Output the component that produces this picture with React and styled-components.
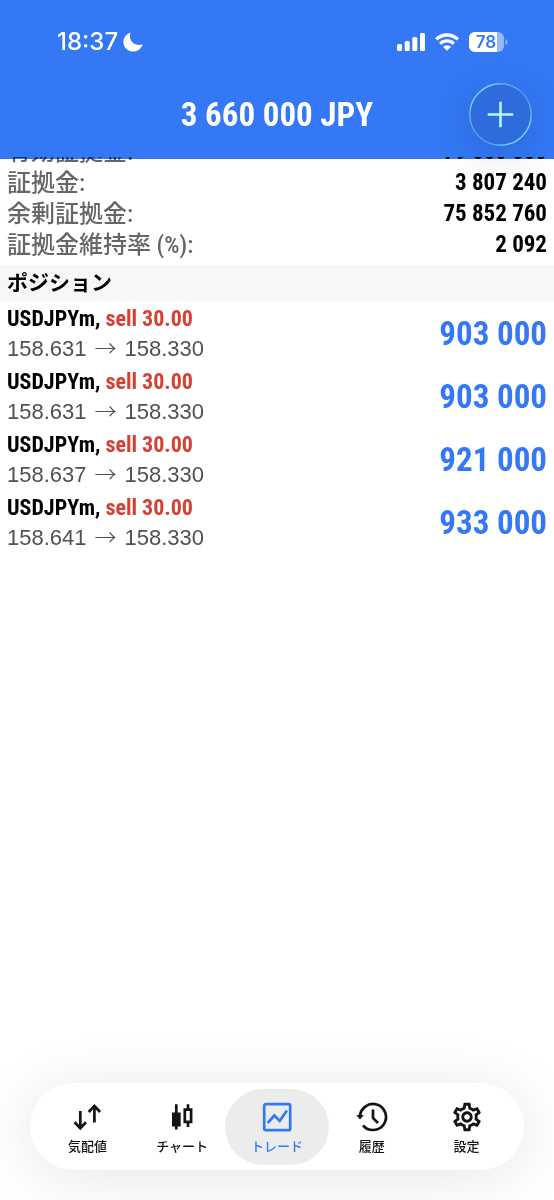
import React from "react";
import styled, { createGlobalStyle } from "styled-components";
import { MdOutlineSettings } from "react-icons/md";

const GlobalStyle = createGlobalStyle`
  * {
    box-sizing: border-box;
  }

  body {
    margin: 0;
    background: #fff;
    font-family: "Liberation Sans", "Noto Sans CJK JP", sans-serif;
  }

  button {
    font-family: inherit;
    border: none;
    background: none;
    cursor: pointer;
  }
`;

const narrow = `"Roboto Condensed", Roboto, "Noto Sans CJK JP", sans-serif`;
const japanese = `"Liberation Sans", "Noto Sans CJK JP", sans-serif`;

const Screen = styled.div`
  display: flex;
  flex-direction: column;
  min-height: 100vh;
  overflow: hidden;
`;

const Header = styled.header`
  position: relative;
  color: #fff;
`;

const HeaderFill = styled.div`
  position: absolute;
  inset: 0 0 2px;
  background: #3478f6;
`;

/* the list shows through the last few pixels of the header */
const HeaderEdge = styled.div`
  position: absolute;
  inset: auto 0 0;
  height: 2px;
  background: #3478f6;
  mix-blend-mode: multiply;
`;

const StatusBar = styled.div`
  position: relative;
  display: flex;
  align-items: center;
  justify-content: space-between;
  height: 83px;
  padding: 0 46px 0 57px;
`;

const StatusGroup = styled.div`
  display: flex;
  align-items: center;
  gap: ${({ $gap }) => $gap}px;
`;

const Clock = styled.span`
  font: 500 24px/28px Inter, sans-serif;
`;

const TitleBar = styled.div`
  position: relative;
  display: grid;
  grid-template-columns: 1fr auto 1fr;
  align-items: center;
  height: 76px;
  padding: 0 22px 14px;
`;

const Title = styled.h1`
  grid-column: 2;
  margin: 0;
  font: 700 33px/40px ${narrow};
`;

const AddButton = styled.button`
  justify-self: end;
  display: flex;
  align-items: center;
  justify-content: center;
  width: 63px;
  height: 63px;
  padding: 0;
  border-radius: 50%;
  color: #b8f6ff;
  background: rgba(0, 0, 0, 0.1);
  box-shadow: 0 8px 44px rgba(0, 0, 0, 0.14);
`;

const Summary = styled.dl`
  margin: -23px 0 0;
  padding: 0 7px 5px;
`;

const SummaryRow = styled.div`
  display: flex;
  align-items: center;
  justify-content: space-between;
  height: 31px;
`;

const SummaryLabel = styled.dt`
  color: #666;
  font: 500 24px/28px ${narrow};
`;

const SummaryValue = styled.dd`
  margin: 0;
  color: #000;
  font: 700 23px/28px ${narrow};
`;

const SectionTitle = styled.h2`
  margin: 0;
  padding: 0 7px;
  color: #000;
  background: #f7f7f7;
  font: 700 21px/36px ${japanese};
`;

const PositionList = styled.ul`
  margin: 0;
  padding: 0;
  list-style: none;
`;

const Position = styled.li`
  display: flex;
  align-items: center;
  justify-content: space-between;
  height: 63px;
  padding: 2px 7px 0;
`;

const Symbol = styled.div`
  color: #000;
  font: 700 22px/30px ${narrow};
`;

const Side = styled.span`
  color: #d63f31;
`;

const Prices = styled.div`
  display: flex;
  gap: 8px;
  color: #505055;
  font: 400 22px/30px "Liberation Sans", sans-serif;
`;

const Arrow = styled.span`
  font-family: "Noto Sans CJK JP", sans-serif;
  font-weight: 300;
  line-height: 24px;
`;

const Profit = styled.strong`
  color: #3478f6;
  font: 700 33px/40px ${narrow};
`;

const TabBar = styled.nav`
  display: flex;
  margin: auto 30px 30px;
  padding: 6px 10px 5px;
  border-radius: 44px;
  background: #fff;
  box-shadow: 0 6px 60px rgba(0, 0, 0, 0.1);
`;

const Tab = styled.button`
  flex: 1;
  display: flex;
  flex-direction: column;
  align-items: center;
  gap: 4px;
  height: 76px;
  margin: 0 -5px;
  padding: 12px 0 0;
  border-radius: 38px;
  color: ${({ $active }) => ($active ? "#3478f6" : "#141414")};
  background: ${({ $active }) => ($active ? "#ececec" : "transparent")};
`;

const TabLabel = styled.span`
  font: 500 13px/20px ${japanese};
`;

const MoonIcon = () => (
  <svg width="20" height="20" viewBox="0 0 20 20" fill="currentColor" aria-hidden="true">
    <path d="M7.600 0.400C7 1.600 6.900 2.700 6.900 3.900C6.900 9 10.900 12.900 16 12.900C17.400 12.900 18.600 12.700 19.800 12.200C18.300 16.600 14.600 19.500 10.200 19.500C4.700 19.500 0.400 15.300 0.400 9.900C0.400 5.500 3.300 1.900 7.600 0.400Z" />
  </svg>
);

const SignalIcon = () => (
  <svg width="28" height="18" viewBox="0 0 28 18" fill="currentColor" aria-hidden="true">
    <rect x="0" y="11" width="5" height="7" rx="1.500" />
    <rect x="7.700" y="8" width="5" height="10" rx="1.500" />
    <rect x="15.300" y="4" width="5" height="14" rx="1.500" />
    <rect x="23" y="0" width="5" height="18" rx="1.500" />
  </svg>
);

const WifiIcon = () => (
  <svg width="24" height="18" viewBox="0 0 24 18" aria-hidden="true">
    <g fill="none" stroke="currentColor" strokeWidth="3.300">
      <path d="M1.200 6.400a15.500 15.500 0 0 1 21.600 0" />
      <path d="M5.200 10.700a9.800 9.800 0 0 1 13.600 0" />
    </g>
    <path d="M12 17.800l-4-4a5.700 5.700 0 0 1 8 0z" fill="currentColor" />
  </svg>
);

const BatteryIcon = () => (
  <svg width="39" height="20" viewBox="0 0 39 20" role="img" aria-label="78%">
    <defs>
      <clipPath id="battery">
        <rect width="35" height="20" rx="6" />
      </clipPath>
    </defs>
    <g clipPath="url(#battery)">
      <rect width="35" height="20" fill="#96b9fa" />
      <rect width="28" height="20" fill="#fff" />
    </g>
    <path d="M36.500 7c2.500 1 2.500 5 0 6z" fill="#96b9fa" />
    <text x="17" y="16" textAnchor="middle" fill="#3478f6" fontFamily="Inter, sans-serif" fontSize="17" fontWeight="600">
      78
    </text>
  </svg>
);

const PlusIcon = () => (
  <svg width="63" height="63" viewBox="0 0 63 63" fill="none" aria-hidden="true">
    <defs>
      <linearGradient id="rim" x1="0" y1="1" x2="1" y2="0">
        <stop offset="0.100" stopColor="#4a90ec" />
        <stop offset="0.350" stopColor="#78d2f6" />
        <stop offset="0.650" stopColor="#78d2f6" />
        <stop offset="0.900" stopColor="#4a90ec" />
      </linearGradient>
    </defs>
    <circle cx="31.500" cy="31.500" r="30.700" stroke="url(#rim)" strokeWidth="1.400" />
    <path d="M31.500 18.700v25.600M18.700 31.500h25.600" stroke="currentColor" strokeWidth="2.600" />
  </svg>
);

const TabIcon = ({ children }) => (
  <svg
    width="32"
    height="32"
    viewBox="0 0 32 32"
    fill="none"
    stroke="currentColor"
    strokeWidth="2.700"
    overflow="visible"
    aria-hidden="true"
  >
    {children}
  </svg>
);

const tabs = [
  {
    label: "気配値",
    icon: (
      <path d="M9.300 10v18M3.600 21.200l5.700 6 5.700-6M23.400 21.500V4.500M17.700 11l5.700-6 5.700 6" />
    ),
  },
  {
    label: "チャート",
    icon: (
      <>
        <path d="M10.300 3.300v25.200M22 3.300v5M22 21v5" />
        <rect x="6" y="11.500" width="8.700" height="14" fill="currentColor" stroke="none" />
        <rect x="18.800" y="8.600" width="6.300" height="12.300" />
      </>
    ),
  },
  {
    label: "トレード",
    active: true,
    icon: (
      <>
        <rect x="3.200" y="3.200" width="26" height="26" rx="1.500" />
        <path d="M6.700 22l6.600-7.500 5.400 5.500 7.200-10.500" />
      </>
    ),
  },
  {
    label: "履歴",
    icon: (
      <>
        <path d="M4 16a13 13 0 1 1 3 8.300" />
        <path d="M0.300 14h7.600L4 18.600z" fill="currentColor" stroke="none" />
        <path d="M17 8.500V17l5 5" />
      </>
    ),
  },
  {
    label: "設定",
    icon: <MdOutlineSettings x="-1" y="-1" size={34} />,
  },
];

const summary = [
  { label: "有効証拠金:", value: "79 660 000" },
  { label: "証拠金:", value: "3 807 240" },
  { label: "余剰証拠金:", value: "75 852 760" },
  { label: "証拠金維持率 (%):", value: "2 092" },
];

const positions = [
  { id: 1, open: "158.631", current: "158.330", profit: "903 000" },
  { id: 2, open: "158.631", current: "158.330", profit: "903 000" },
  { id: 3, open: "158.637", current: "158.330", profit: "921 000" },
  { id: 4, open: "158.641", current: "158.330", profit: "933 000" },
];

function App() {
  return (
    <Screen>
      <GlobalStyle />
      <Header>
        <HeaderFill />
        <HeaderEdge />
        <StatusBar>
          <StatusGroup $gap={5}>
            <Clock>18:37</Clock>
            <MoonIcon />
          </StatusGroup>
          <StatusGroup $gap={10}>
            <SignalIcon />
            <WifiIcon />
            <BatteryIcon />
          </StatusGroup>
        </StatusBar>
        <TitleBar>
          <Title>3 660 000 JPY</Title>
          <AddButton type="button" aria-label="追加">
            <PlusIcon />
          </AddButton>
        </TitleBar>
      </Header>

      <Summary>
        {summary.map((item) => (
          <SummaryRow key={item.label}>
            <SummaryLabel>{item.label}</SummaryLabel>
            <SummaryValue>{item.value}</SummaryValue>
          </SummaryRow>
        ))}
      </Summary>

      <SectionTitle>ポジション</SectionTitle>
      <PositionList>
        {positions.map((position) => (
          <Position key={position.id}>
            <div>
              <Symbol>
                USDJPYm, <Side>sell 30.00</Side>
              </Symbol>
              <Prices>
                <span>{position.open}</span>
                <Arrow>→</Arrow>
                <span>{position.current}</span>
              </Prices>
            </div>
            <Profit>{position.profit}</Profit>
          </Position>
        ))}
      </PositionList>

      <TabBar>
        {tabs.map((tab) => (
          <Tab
            key={tab.label}
            type="button"
            $active={tab.active}
            aria-current={tab.active ? "page" : undefined}
          >
            <TabIcon>{tab.icon}</TabIcon>
            <TabLabel>{tab.label}</TabLabel>
          </Tab>
        ))}
      </TabBar>
    </Screen>
  );
}

export default App;
